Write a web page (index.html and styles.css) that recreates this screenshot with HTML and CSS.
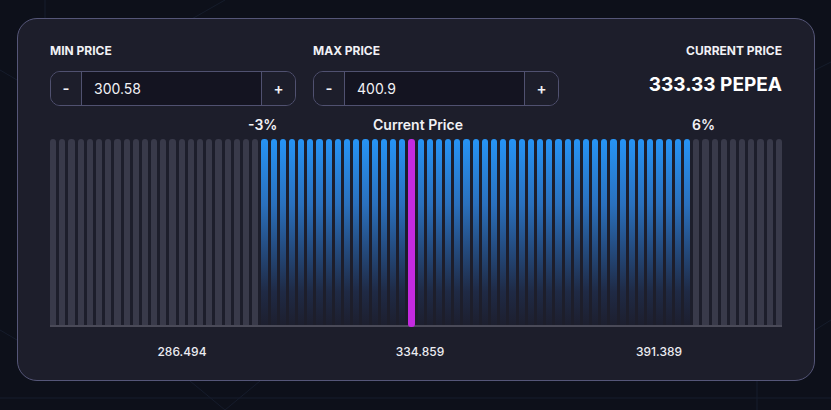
FILE: index.html
```html
<!DOCTYPE html>
<html lang="en">
<head>
<meta charset="utf-8">
<title>Price Range</title>
<link rel="stylesheet" href="styles.css">
</head>
<body>
<svg class="bg-lines" width="831" height="410" viewBox="0 0 831 410" aria-hidden="true">
  <g stroke="#161c2c" stroke-width="1" fill="none">
    <line x1="45" y1="0" x2="45" y2="30"/>
    <line x1="190" y1="20" x2="225" y2="0"/>
    <line x1="0" y1="70" x2="17" y2="80"/>
    <line x1="0" y1="398" x2="831" y2="398"/>
    <line x1="190" y1="381" x2="225" y2="410"/>
    <line x1="225" y1="410" x2="260" y2="381"/>
    <line x1="757" y1="381" x2="757" y2="410"/>
    <line x1="815" y1="330" x2="831" y2="320"/>
    <line x1="815" y1="70" x2="831" y2="62"/>
    <line x1="0" y1="330" x2="17" y2="340"/>
  </g>
</svg>
<div class="card">
  <div class="header">
    <div class="field">
      <div class="label">MIN PRICE</div>
      <div class="stepper">
        <div class="step minus">-</div>
        <div class="value">300.58</div>
        <div class="step plus">+</div>
      </div>
    </div>
    <div class="field">
      <div class="label">MAX PRICE</div>
      <div class="stepper">
        <div class="step minus">-</div>
        <div class="value">400.9</div>
        <div class="step plus">+</div>
      </div>
    </div>
    <div class="current">
      <div class="label">CURRENT PRICE</div>
      <div class="price">333.33 PEPEA</div>
    </div>
  </div>
  <div class="marks">
    <span class="mark" style="left:198px">-3%</span>
    <span class="mark" style="left:323px">Current Price</span>
    <span class="mark" style="left:642px">6%</span>
  </div>
  <div class="chart" id="chart"></div>
  <div class="axis">
    <span class="tick" style="left:132px">286.494</span>
    <span class="tick" style="left:370px">334.859</span>
    <span class="tick" style="left:609px">391.389</span>
  </div>
</div>
<script src="script.js"></script>
</body>
</html>
```
FILE: script.js
```js
(function () {
  var chart = document.getElementById('chart');
  for (var i = 0; i < 80; i++) {
    var b = document.createElement('div');
    var cls = 'bar';
    if (i === 39) cls += ' now';
    else if (i >= 23 && i <= 69) cls += ' in';
    b.className = cls;
    chart.appendChild(b);
  }
})();
```
FILE: styles.css
```css
* { box-sizing: border-box; }
html, body {
  margin: 0;
  padding: 0;
}
body {
  width: 831px;
  height: 410px;
  background: #0d101a;
  font-family: Inter, "Noto Sans", "Liberation Sans", sans-serif;
  color: #eeeef3;
  position: relative;
  overflow: hidden;
}
.bg-lines {
  position: absolute;
  left: 0;
  top: 0;
}
.card {
  position: relative;
  margin: 18px 0 0 17px;
  width: 798px;
  height: 363px;
  border: 1px solid #555678;
  border-radius: 20px;
  background: #1d1e2b;
  padding: 25px 32px 0 32px;
}
.header {
  display: flex;
  align-items: flex-start;
}
.field {
  width: 246px;
  margin-right: 17px;
}
.label {
  font-size: 12px;
  font-weight: 700;
  line-height: 13px;
  color: #f1f1f5;
}
.stepper {
  margin-top: 14px;
  display: flex;
  height: 35px;
  border: 1px solid #505170;
  border-radius: 10px;
  overflow: hidden;
}
.step {
  display: flex;
  align-items: center;
  justify-content: center;
  font-size: 15px;
  font-weight: 600;
  color: #f1f1f5;
  background: #1d1e2b;
}
.minus {
  width: 31px;
  border-right: 1px solid #505170;
}
.plus {
  width: 34px;
  border-left: 1px solid #505170;
}
.value {
  flex: 1;
  background: #141421;
  display: flex;
  align-items: center;
  padding-left: 12px;
  font-size: 14px;
  color: #f1f1f5;
}
.current {
  margin-left: auto;
  text-align: right;
}
.price {
  margin-top: 16px;
  font-size: 19px;
  font-weight: 700;
  line-height: 24px;
  color: #ffffff;
}
.marks {
  position: relative;
  height: 33px;
}
.mark {
  position: absolute;
  top: 10px;
  font-size: 14px;
  font-weight: 600;
  line-height: 17px;
  color: #f1f1f5;
  white-space: nowrap;
}
.chart {
  display: flex;
  gap: 3px;
  height: 188px;
  background: linear-gradient(#4a4a58, #4a4a58) bottom / 100% 2px no-repeat;
}
.bar {
  flex: 1;
  margin-bottom: 2px;
  border-radius: 3px 3px 0 0;
  background: #393a4a;
}
.bar.in {
  background: linear-gradient(to bottom, #2694f6 0%, #2a70bd 35%, #244a7c 60%, #1f2a45 82%, #1d1f2f 100%);
}
.bar.now {
  margin-bottom: 0;
  border-radius: 3px;
  background: #c42ae0;
}
.axis {
  position: relative;
  height: 40px;
}
.tick {
  position: absolute;
  top: 17px;
  transform: translateX(-50%);
  font-size: 12px;
  font-weight: 500;
  line-height: 15px;
  color: #ececf1;
  white-space: nowrap;
}
```
